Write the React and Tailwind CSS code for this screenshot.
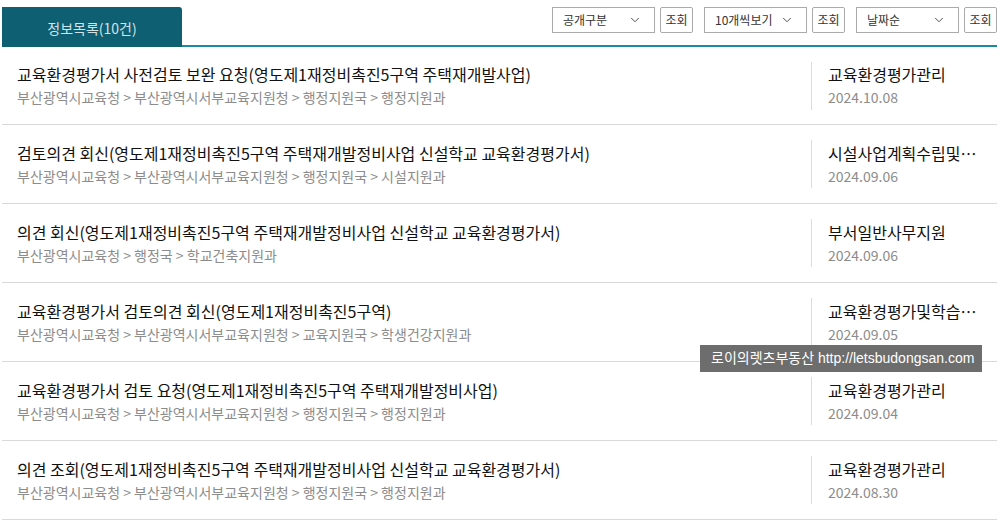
import { ChevronDown } from 'lucide-react';

const rows = [
  {
    title: '교육환경평가서 사전검토 보완 요청(영도제1재정비촉진5구역 주택재개발사업)',
    path: '부산광역시교육청 > 부산광역시서부교육지원청 > 행정지원국 > 행정지원과',
    dept: '교육환경평가관리',
    date: '2024.10.08',
  },
  {
    title: '검토의견 회신(영도제1재정비촉진5구역 주택재개발정비사업 신설학교 교육환경평가서)',
    path: '부산광역시교육청 > 부산광역시서부교육지원청 > 행정지원국 > 시설지원과',
    dept: '시설사업계획수립및학교시설',
    date: '2024.09.06',
  },
  {
    title: '의견 회신(영도제1재정비촉진5구역 주택재개발정비사업 신설학교 교육환경평가서)',
    path: '부산광역시교육청 > 행정국 > 학교건축지원과',
    dept: '부서일반사무지원',
    date: '2024.09.06',
  },
  {
    title: '교육환경평가서 검토의견 회신(영도제1재정비촉진5구역)',
    path: '부산광역시교육청 > 부산광역시서부교육지원청 > 교육지원국 > 학생건강지원과',
    dept: '교육환경평가및학습환경관리',
    date: '2024.09.05',
  },
  {
    title: '교육환경평가서 검토 요청(영도제1재정비촉진5구역 주택재개발정비사업)',
    path: '부산광역시교육청 > 부산광역시서부교육지원청 > 행정지원국 > 행정지원과',
    dept: '교육환경평가관리',
    date: '2024.09.04',
  },
  {
    title: '의견 조회(영도제1재정비촉진5구역 주택재개발정비사업 신설학교 교육환경평가서)',
    path: '부산광역시교육청 > 부산광역시서부교육지원청 > 행정지원국 > 행정지원과',
    dept: '교육환경평가관리',
    date: '2024.08.30',
  },
];

function Filter({ label }) {
  return (
    <div className="flex items-center gap-[5px]">
      <div className="flex h-[26px] w-[103px] items-center justify-between border border-[#aaaaaa] bg-white pl-[10px] pr-[12px] text-[12px] text-[#333]">
        <span>{label}</span>
        <ChevronDown size={14} strokeWidth={1.6} className="text-[#444]" />
      </div>
      <button className="flex h-[26px] w-[33px] items-center justify-center rounded-[2px] border border-[#aaaaaa] bg-white text-[12px] text-[#333]">
        조회
      </button>
    </div>
  );
}

export default function App() {
  return (
    <div
      className="relative h-[525px] w-[1007px] overflow-hidden bg-white"
      style={{ fontFamily: '"Noto Sans CJK KR", "Noto Sans", sans-serif' }}
    >
      <div className="ml-[2px] w-[995px]">
        <div className="flex h-[47px] items-end justify-between border-b-2 border-[#1a8aa2]">
          <div className="-mb-[2px] flex h-[40px] w-[180px] items-center justify-center rounded-tr-[3px] bg-[#0f5f72] pt-[2px] text-[14px] text-[#d2e3e8]">
            정보목록(10건)
          </div>
          <div className="mb-[12px] flex gap-[11px]">
            <Filter label="공개구분" />
            <Filter label="10개씩보기" />
            <Filter label="날짜순" />
          </div>
        </div>

        {rows.map((r, i) => (
          <div key={i} className={`flex ${i === 0 ? 'h-[78px]' : 'h-[79px]'} items-center border-b border-[#d9d9d9]`}>
            <div className="flex min-w-0 flex-1 flex-col pl-[15px]">
              <div className="truncate text-[16px] leading-[22px] text-[#111]">{r.title}</div>
              <div className="mt-[1px] truncate text-[14px] leading-[22px] text-[#8c8c8c]">{r.path}</div>
            </div>
            <div className="flex h-[48px] w-[186px] flex-col justify-center border-l border-[#dcdcdc] pl-[16px] pr-[7px]">
              <div className="truncate text-[16px] leading-[22px] text-[#111]">{r.dept}</div>
              <div className="mt-[1px] text-[14px] leading-[22px] text-[#8c8c8c]">{r.date}</div>
            </div>
          </div>
        ))}
      </div>

      <div
        className="absolute left-[700px] top-[345px] flex h-[27px] w-[282px] items-center bg-[#6d6d6d] pl-[11px] text-[14px] text-white"
        style={{ fontFamily: '"Liberation Sans", "Noto Sans CJK KR", sans-serif' }}
      >
        로이의렛츠부동산 http://letsbudongsan.com
      </div>
    </div>
  );
}
